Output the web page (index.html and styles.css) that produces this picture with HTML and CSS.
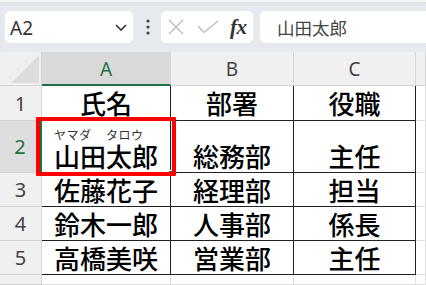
FILE: index.html
```html
<!DOCTYPE html>
<html lang="ja">
<head>
    <meta charset="UTF-8">
    <title>ふりがな表示</title>
    <link rel="stylesheet" href="styles.css">
</head>
<body>
    <div class="toolbar">
        <div class="namebox">
            <span class="ref">A2</span>
            <svg class="chev" width="12" height="7" viewBox="0 0 12 7"><polyline points="1,1 6,6 11,1" fill="none" stroke="#333" stroke-width="1.6"/></svg>
        </div>
        <div class="more">
            <svg width="4" height="16" viewBox="0 0 4 16"><circle cx="2" cy="2" r="1.6" fill="#444"/><circle cx="2" cy="8" r="1.6" fill="#444"/><circle cx="2" cy="14" r="1.6" fill="#444"/></svg>
        </div>
        <div class="fxbox">
            <svg width="16" height="16" viewBox="0 0 16 16"><path d="M1 1 L15 15 M15 1 L1 15" stroke="#b8b8b8" stroke-width="1.2" fill="none"/></svg>
            <svg width="22" height="14" viewBox="0 0 22 14"><polyline points="1,6 7,12.5 21,1" fill="none" stroke="#b8b8b8" stroke-width="1.2"/></svg>
            <span class="fx">fx</span>
        </div>
        <div class="formula">山田太郎</div>
    </div>

    <div class="sheet">
        <!-- 列見出し -->
        <div class="corner"><div class="tri"></div></div>
        <div class="hd sel">A</div>
        <div class="hd">B</div>
        <div class="hd">C</div>
        <div class="hd"></div>

        <div class="rh">1</div>
        <div class="c">氏名</div>
        <div class="c">部署</div>
        <div class="c">役職</div>
        <div class="x"></div>

        <div class="rh sel">2</div>
        <div class="c tall">
            <div class="kana"><span>ヤマダ</span><span>タロウ</span></div>
            <div>山田太郎</div>
        </div>
        <div class="c tall">総務部</div>
        <div class="c tall">主任</div>
        <div class="x"></div>

        <div class="rh">3</div>
        <div class="c">佐藤花子</div>
        <div class="c">経理部</div>
        <div class="c">担当</div>
        <div class="x"></div>

        <div class="rh">4</div>
        <div class="c">鈴木一郎</div>
        <div class="c">人事部</div>
        <div class="c">係長</div>
        <div class="x"></div>

        <div class="rh">5</div>
        <div class="c">高橋美咲</div>
        <div class="c">営業部</div>
        <div class="c">主任</div>
        <div class="x"></div>

        <div class="rh"></div>
        <div class="x"></div>
        <div class="x"></div>
        <div class="x"></div>
        <div class="x"></div>

        <div class="handle"></div>
        <div class="mark"></div>
    </div>
</body>
</html>
```

FILE: styles.css
```css
* {
    box-sizing: border-box;
}
body {
    margin: 0;
    width: 426px;
    height: 285px;
    overflow: hidden;
    background: #fff;
    font-family: "Noto Sans", "Noto Sans CJK JP", sans-serif;
}
/* 数式バー */
.toolbar {
    height: 52px;
    display: flex;
    align-items: flex-start;
    padding: 11px 0 0 5px;
    background: #e6e9ee;
    box-shadow: inset 0 2px 0 #f4f5f7, inset 0 4px 3px -1px #dadde3;
    overflow: hidden;
}
.namebox {
    width: 128px;
    height: 32px;
    background: #fff;
    border-radius: 5px;
    display: flex;
    align-items: center;
    justify-content: space-between;
    padding: 0 6px 0 5px;
}
.ref {
    font-size: 19px;
    color: #333;
    line-height: 1;
    margin-top: 3px;
}
.chev {
    margin-top: 1px;
}
.more {
    width: 28px;
    height: 32px;
    display: flex;
    align-items: center;
    justify-content: center;
    padding-left: 1px;
}
.fxbox {
    width: 92px;
    height: 32px;
    background: #fff;
    border-radius: 5px;
    display: flex;
    align-items: center;
    padding-left: 7px;
    gap: 13px;
}
.fx {
    font-family: "Liberation Serif", serif;
    font-style: italic;
    font-weight: 700;
    font-size: 21px;
    color: #333;
    margin-left: -2px;
    letter-spacing: -0.5px;
}
.formula {
    flex: 1;
    height: 32px;
    margin-left: 7px;
    margin-right: -10px;
    background: #fff;
    border-radius: 5px;
    display: flex;
    align-items: center;
    padding-left: 17px;
    font-family: "Noto Sans CJK JP", sans-serif;
    font-size: 17.5px;
    color: #444;
}
/* シート */
.sheet {
    position: relative;
    display: grid;
    grid-template-columns: 42px 129px 123px 122px 1fr;
    grid-template-rows: 34px 35px 52px 34px 34px 34px 1fr;
    height: 233px;
}
.corner {
    background: #f0f0f0;
    border-right: 1px solid #d4d4d4;
    border-bottom: 1px solid #d4d4d4;
    position: relative;
}
.tri {
    position: absolute;
    right: 2px;
    bottom: 2px;
    width: 28px;
    height: 28px;
    background: #dcdcdc;
    clip-path: polygon(100% 0, 100% 100%, 0 100%);
}
.hd {
    background: #f0f0f0;
    border-right: 1px solid #d4d4d4;
    border-bottom: 1px solid #d4d4d4;
    color: #444;
    font-size: 19px;
    display: flex;
    align-items: center;
    justify-content: center;
    padding-top: 1px;
}
.hd.sel {
    background: #d9d9d9;
    color: #1e7145;
    border-bottom: 2px solid #1e7145;
}
.rh {
    background: #f0f0f0;
    border-right: 1px solid #d4d4d4;
    border-bottom: 1px solid #d4d4d4;
    color: #444;
    font-size: 20px;
    display: flex;
    align-items: center;
    justify-content: center;
}
.rh.sel {
    background: #dedede;
    color: #1e7145;
    border-right: 2px solid #1e7145;
}
.c {
    border-right: 1px solid #222;
    border-bottom: 1px solid #222;
    font-family: "Noto Sans CJK JP", sans-serif;
    font-size: 26px;
    font-weight: 500;
    color: #000;
    display: flex;
    flex-direction: column;
    align-items: center;
    justify-content: center;
    line-height: 1;
}
.c.tall {
    justify-content: flex-end;
    padding-bottom: 3px;
}
.kana {
    display: flex;
    width: 104px;
    font-size: 12px;
    font-weight: 400;
    color: #333;
    letter-spacing: 0.5px;
    margin-bottom: 2px;
}
.kana span {
    width: 53px;
}
.x {
    border-right: 1px solid #e1e1e1;
    border-bottom: 1px solid #e1e1e1;
}
/* 選択セル */
.handle {
    position: absolute;
    left: 168px;
    top: 118px;
    width: 5px;
    height: 5px;
    background: #1e7145;
    border: 1px solid #fff;
}
.mark {
    position: absolute;
    left: 36px;
    top: 65px;
    width: 140px;
    height: 59px;
    border: 4px solid #f00;
    border-radius: 1px;
}
```
